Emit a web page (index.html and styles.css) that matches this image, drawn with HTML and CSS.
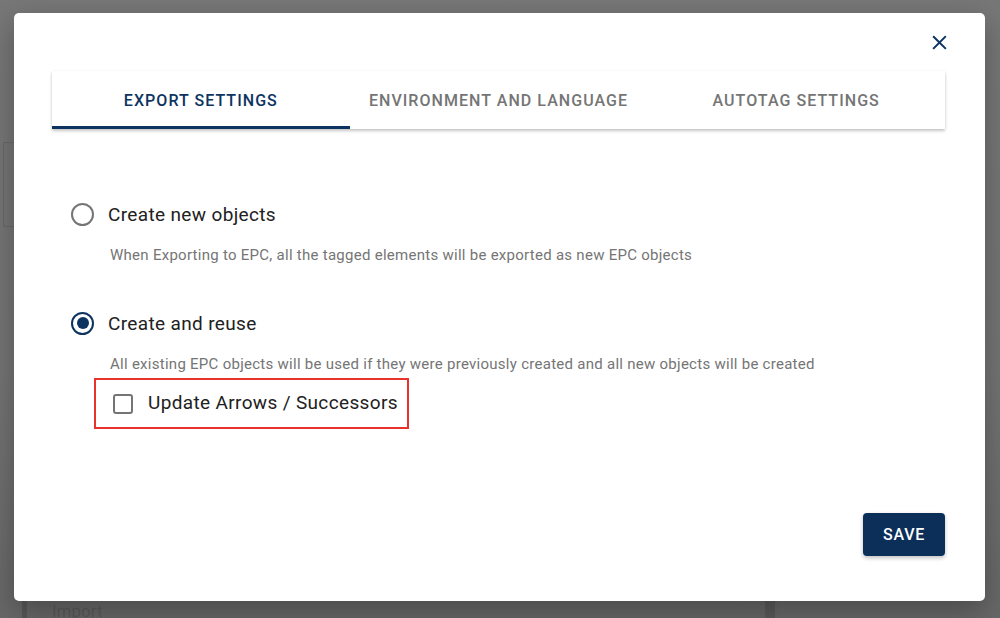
FILE: index.html
```html
<!DOCTYPE html>
<html lang="en">
<head>
<meta charset="utf-8">
<title>Export Settings</title>
<link rel="stylesheet" href="styles.css">
</head>
<body>
<div class="backdrop-page">
  <div class="side-box"></div>
  <div class="bottom-panel">
    <span class="bar bar-left"></span>
    <span class="import-label">Import</span>
    <span class="caret">^</span>
    <span class="bar bar-right"></span>
  </div>
</div>
<div class="overlay"></div>
<div class="dialog" role="dialog">
  <button class="close" aria-label="Close">
    <svg width="16" height="16" viewBox="0 0 16 16"><path d="M2 2 L14 14 M14 2 L2 14" stroke="#0d3461" stroke-width="2.2" stroke-linecap="square" fill="none"/></svg>
  </button>
  <div class="tabs">
    <div class="tab active">EXPORT SETTINGS</div>
    <div class="tab">ENVIRONMENT AND LANGUAGE</div>
    <div class="tab">AUTOTAG SETTINGS</div>
  </div>
  <div class="content">
    <label class="option first">
      <span class="radio"></span>
      <span class="option-label">Create new objects</span>
    </label>
    <p class="desc">When Exporting to EPC, all the tagged elements will be exported as new EPC objects</p>
    <label class="option second">
      <span class="radio checked"></span>
      <span class="option-label">Create and reuse</span>
    </label>
    <p class="desc">All existing EPC objects will be used if they were previously created and all new objects will be created</p>
    <div class="highlight">
      <span class="checkbox"></span>
      <span class="option-label">Update Arrows / Successors</span>
    </div>
  </div>
  <div class="footer">
    <button class="save">SAVE</button>
  </div>
</div>
</body>
</html>
```
FILE: styles.css
```css
html, body {
  margin: 0;
  padding: 0;
  width: 1000px;
  height: 618px;
  overflow: hidden;
  font-family: Roboto, "Liberation Sans", sans-serif;
}
.backdrop-page {
  position: absolute;
  inset: 0;
  background: #e6e6e6;
}
.side-box {
  position: absolute;
  left: 3px;
  top: 142px;
  width: 20px;
  height: 83px;
  border: 1px solid #333;
  background: #d8d8d8;
}
.bottom-panel {
  position: absolute;
  left: 22px;
  top: 598px;
  width: 758px;
  height: 40px;
  background: #dcdcdc;
}
.bar {
  position: absolute;
  top: 0;
  width: 5px;
  height: 40px;
  background: #000;
}
.bar-left { left: 0; }
.bar-right { left: 743px; width: 10px; background: #222; }
.import-label {
  position: absolute;
  left: 30px;
  top: 3px;
  font-size: 17px;
  color: #111;
}
.caret {
  position: absolute;
  left: 717px;
  top: 0;
  font-size: 11px;
  color: #fff;
}
.overlay {
  position: absolute;
  inset: 0;
  background: linear-gradient(#6f6f6f 0%, #6c6c6c 60%, #5e5e5e 100%);
  opacity: 0.93;
}
.dialog {
  position: absolute;
  left: 14px;
  top: 13px;
  width: 971px;
  height: 588px;
  background: #fff;
  border-radius: 5px;
  box-shadow: 0 10px 30px rgba(0,0,0,0.3);
  display: flex;
  flex-direction: column;
  box-sizing: border-box;
  padding: 58px 40px 45px 38px;
}
.close {
  position: absolute;
  right: 34px;
  top: 17px;
  width: 24px;
  height: 24px;
  padding: 0;
  border: 0;
  background: transparent;
  display: flex;
  align-items: center;
  justify-content: center;
}
.close svg { width: 15px; height: 15px; }
.tabs {
  display: flex;
  height: 58px;
  background: #fff;
  box-shadow: 0 2px 3px rgba(0,0,0,0.22), 0 0 2px rgba(0,0,0,0.06);
}
.tab {
  flex: 1;
  display: flex;
  align-items: center;
  justify-content: center;
  font-size: 16px;
  font-weight: 500;
  letter-spacing: 1.05px;
  color: #757575;
  box-sizing: border-box;
  border-bottom: 3px solid transparent;
  padding-top: 3px;
}
.tab.active {
  color: #0d3461;
  border-bottom-color: #0d3461;
}
.content {
  padding-left: 19px;
  margin-top: 65px;
}
.option {
  display: flex;
  align-items: center;
  height: 40px;
  gap: 14px;
  color: #212121;
}
.second { margin-top: 38px; }
.radio {
  width: 23px;
  height: 23px;
  box-sizing: border-box;
  border: 2px solid #757575;
  border-radius: 50%;
  position: relative;
  flex: none;
}
.radio.checked {
  border-color: #0d3461;
}
.radio.checked::after {
  content: "";
  position: absolute;
  left: 3.5px;
  top: 3.5px;
  width: 12px;
  height: 12px;
  border-radius: 50%;
  background: #0d3461;
}
.option-label {
  font-size: 19px;
  color: #212121;
  letter-spacing: 0.35px;
}
.desc {
  margin: 11px 0 0 39px;
  font-size: 15px;
  line-height: 20px;
  color: #757575;
  letter-spacing: 0.27px;
}
.highlight {
  margin: 4px 0 0 23px;
  width: 315px;
  height: 51px;
  box-sizing: border-box;
  border: 2px solid #e8322b;
  display: flex;
  align-items: center;
  padding: 0 0 3px 17px;
  gap: 15px;
}
.checkbox {
  width: 20px;
  height: 20px;
  box-sizing: border-box;
  border: 2px solid #757575;
  border-radius: 3px;
  flex: none;
  margin-top: 3px;
}
.footer {
  margin-top: auto;
  display: flex;
  justify-content: flex-end;
}
.save {
  width: 82px;
  height: 43px;
  border: 0;
  border-radius: 4px;
  background: #0b2f59;
  color: #fff;
  font-family: Roboto, "Liberation Sans", sans-serif;
  font-size: 16px;
  font-weight: 500;
  letter-spacing: 0.8px;
  box-shadow: 0 2px 4px rgba(0,0,0,0.25);
}
```
